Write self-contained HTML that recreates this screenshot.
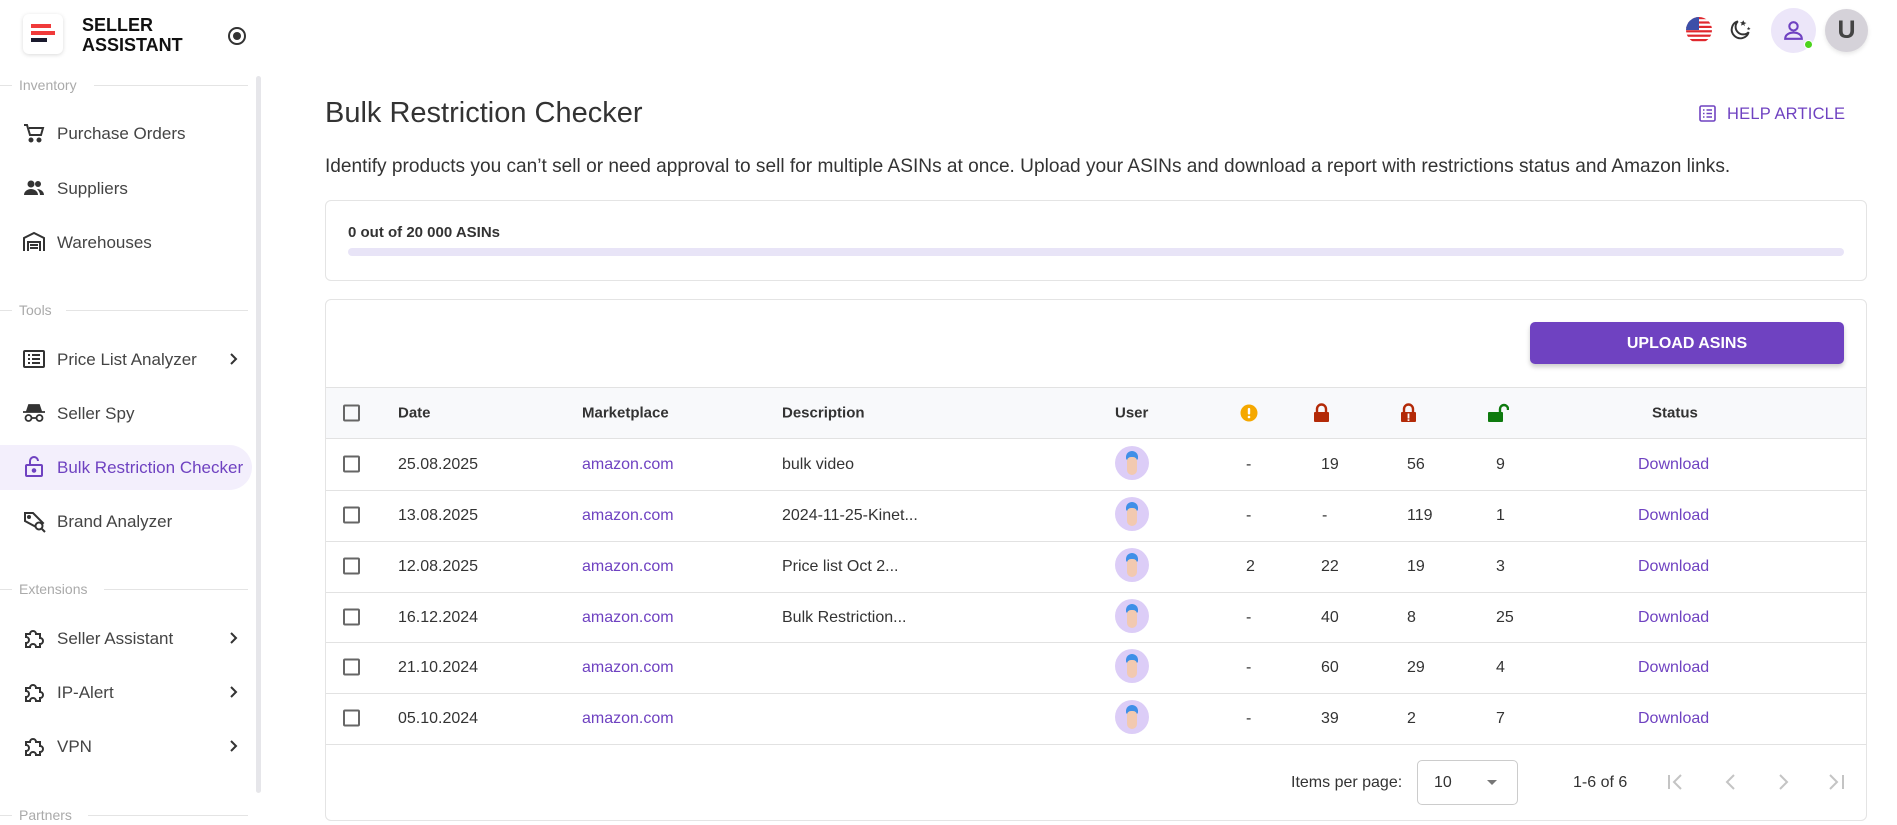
<!DOCTYPE html>
<html><head><meta charset="utf-8"><style>
*{box-sizing:border-box;margin:0;padding:0}
body{width:1897px;height:825px;overflow:hidden;background:#fff;font-family:"Liberation Sans",sans-serif;color:#333;position:relative}
.a{position:absolute;white-space:nowrap}
.sec{position:absolute;left:19px;font-size:14px;color:#aaa;}
.secl{position:absolute;height:1px;background:#e4e4e4;right:48px}
.nav{position:absolute;left:57px;font-size:17px;color:#444;transform:translateY(-50%);margin-top:1px}
.ico{position:absolute;left:22px;width:24px;height:24px;transform:translateY(-50%)}
.chev{position:absolute;left:228px;transform:translateY(-50%)}
.th{position:absolute;font-size:15px;font-weight:bold;color:#333;transform:translateY(-50%)}
.td{position:absolute;font-size:16px;color:#333;transform:translateY(-50%);margin-top:1px}
.lk{color:#6f42c1}
.cb{position:absolute;left:343px;width:17px;height:17px;border:2px solid #666;border-radius:2px;transform:translateY(-50%)}
.av{position:absolute;left:1115px;width:34px;height:34px;border-radius:50%;background:#dccdf7;transform:translateY(-50%);overflow:hidden}
.rl{position:absolute;left:326px;width:1540px;height:1px;background:#e2e2e2}
</style></head><body>
<!-- logo -->
<div class="a" style="left:23px;top:14px;width:40px;height:40px;border-radius:6px;background:#fff;box-shadow:0 1px 4px rgba(0,0,0,.15)"></div>
<div class="a" style="left:31px;top:24px;width:20px;height:4px;background:#f03a3a"></div>
<div class="a" style="left:31px;top:31px;width:24px;height:4px;background:#f03a3a"></div>
<div class="a" style="left:31px;top:38px;width:16px;height:4px;background:#1a1a2e"></div>
<div class="a" style="left:82px;top:15px;font-size:18px;font-weight:bold;line-height:20px;color:#111">SELLER<br>ASSISTANT</div>
<div class="a" style="left:228px;top:27px;width:18px;height:18px;border:2px solid #333;border-radius:50%"></div>
<div class="a" style="left:233px;top:32px;width:8px;height:8px;background:#333;border-radius:50%"></div>
<!-- scrollbar -->
<div class="a" style="left:256px;top:76px;width:5px;height:717px;background:#e6e6ea;border-radius:3px"></div>
<!-- sidebar -->
<div class="secl" style="left:0;width:12px;top:85px"></div><div class="sec" style="top:77px">Inventory</div><div class="secl" style="left:94px;width:154px;top:85px"></div>
<svg class="ico" style="top:133px" viewBox="0 0 24 24" fill="none" stroke="#333" stroke-width="2"><path d="M2 4h3l3 10h11l2-7H7"/><circle cx="9" cy="19" r="1.5" fill="#333"/><circle cx="17" cy="19" r="1.5" fill="#333"/></svg>
<div class="nav" style="top:133px">Purchase Orders</div>
<svg class="ico" style="top:188px" viewBox="0 0 24 24" fill="#333"><circle cx="9" cy="8" r="3.5"/><circle cx="16" cy="8" r="3" /><path d="M2 19c0-4 4-6 7-6s7 2 7 6zM15 13c3 0 7 2 7 6h-4c0-2-1-4-3-6z"/></svg>
<div class="nav" style="top:188px">Suppliers</div>
<svg class="ico" style="top:242px" viewBox="0 0 24 24" fill="none" stroke="#333" stroke-width="2"><path d="M2 21V8l10-5 10 5v13M6 21v-9h12v9M8 15h8M8 18h8"/></svg>
<div class="nav" style="top:242px">Warehouses</div>
<div class="secl" style="left:0;width:12px;top:310px"></div><div class="sec" style="top:302px">Tools</div><div class="secl" style="left:66px;width:182px;top:310px"></div>
<svg class="ico" style="top:359px" viewBox="0 0 24 24" fill="none" stroke="#333" stroke-width="2"><rect x="2" y="4" width="20" height="16" rx="1"/><path d="M6 8h2M6 12h2M6 16h2M10 8h8M10 12h8M10 16h8"/></svg>
<div class="nav" style="top:359px">Price List Analyzer</div>
<svg class="chev" style="top:359px" width="12" height="14" viewBox="0 0 12 14"><path d="M3 2l5 5-5 5" stroke="#333" stroke-width="2" fill="none"/></svg>
<svg class="ico" style="top:413px" viewBox="0 0 24 24" fill="none" stroke="#333" stroke-width="1.8"><path d="M5 10l2-6h10l2 6z" fill="#333"/><path d="M1 11h22"/><circle cx="6.5" cy="17" r="3"/><circle cx="17.5" cy="17" r="3"/><path d="M9.5 17h5"/></svg>
<div class="nav" style="top:413px">Seller Spy</div>
<div class="a" style="left:0;top:445px;width:252px;height:45px;background:#f3effc;border-radius:0 23px 23px 0"></div>
<svg class="ico" style="top:467px" viewBox="0 0 24 24" fill="none" stroke="#6f42c1" stroke-width="2"><rect x="4" y="10" width="16" height="11" rx="1"/><path d="M8 10V6a4 4 0 0 1 8 0"/><circle cx="12" cy="15.5" r="1.3" fill="#6f42c1"/></svg>
<div class="nav" style="top:467px;color:#6f42c1">Bulk Restriction Checker</div>
<svg class="ico" style="top:521px" viewBox="0 0 24 24" fill="none" stroke="#333" stroke-width="2"><path d="M3 4h8l10 10-5 5L3 12z"/><circle cx="7" cy="8" r="1" fill="#333"/><circle cx="17" cy="17" r="3.5" fill="#fff"/><path d="M20 20l3 3"/></svg>
<div class="nav" style="top:521px">Brand Analyzer</div>
<div class="secl" style="left:0;width:12px;top:589px"></div><div class="sec" style="top:581px">Extensions</div><div class="secl" style="left:104px;width:144px;top:589px"></div>
<svg class="ico" style="top:638px" viewBox="0 0 24 24" fill="none" stroke="#333" stroke-width="2"><path d="M4 8h4a3 3 0 1 1 6 0h4v4a3 3 0 1 1 0 6v3h-4a3 3 0 1 0-6 0H4v-4a3 3 0 1 0 0-6z"/></svg>
<div class="nav" style="top:638px">Seller Assistant</div>
<svg class="chev" style="top:638px" width="12" height="14" viewBox="0 0 12 14"><path d="M3 2l5 5-5 5" stroke="#333" stroke-width="2" fill="none"/></svg>
<svg class="ico" style="top:692px" viewBox="0 0 24 24" fill="none" stroke="#333" stroke-width="2"><path d="M4 8h4a3 3 0 1 1 6 0h4v4a3 3 0 1 1 0 6v3h-4a3 3 0 1 0-6 0H4v-4a3 3 0 1 0 0-6z"/></svg>
<div class="nav" style="top:692px">IP-Alert</div>
<svg class="chev" style="top:692px" width="12" height="14" viewBox="0 0 12 14"><path d="M3 2l5 5-5 5" stroke="#333" stroke-width="2" fill="none"/></svg>
<svg class="ico" style="top:746px" viewBox="0 0 24 24" fill="none" stroke="#333" stroke-width="2"><path d="M4 8h4a3 3 0 1 1 6 0h4v4a3 3 0 1 1 0 6v3h-4a3 3 0 1 0-6 0H4v-4a3 3 0 1 0 0-6z"/></svg>
<div class="nav" style="top:746px">VPN</div>
<svg class="chev" style="top:746px" width="12" height="14" viewBox="0 0 12 14"><path d="M3 2l5 5-5 5" stroke="#333" stroke-width="2" fill="none"/></svg>
<div class="secl" style="left:0;width:12px;top:815px"></div><div class="sec" style="top:807px">Partners</div><div class="secl" style="left:88px;width:160px;top:815px"></div>
<!-- top right -->
<svg class="a" style="left:1685px;top:16px" width="28" height="28" viewBox="0 0 28 28"><defs><clipPath id="c"><circle cx="14" cy="14" r="13"/></clipPath></defs><g clip-path="url(#c)"><rect width="28" height="28" fill="#fff"/><g fill="#e0282e"><rect y="1" width="28" height="2.2"/><rect y="5.4" width="28" height="2.2"/><rect y="9.8" width="28" height="2.2"/><rect y="14.2" width="28" height="2.2"/><rect y="18.6" width="28" height="2.2"/><rect y="23" width="28" height="2.2"/></g><rect width="14" height="14" fill="#3c4fa8"/></g></svg>
<svg class="a" style="left:1727px;top:17px" width="26" height="26" viewBox="0 0 24 24" fill="none" stroke="#333" stroke-width="1.8"><path d="M10 4a8 8 0 1 0 10 10A7 7 0 0 1 10 4z"/><path d="M15 3l1 2 2 .5-2 1 .5 2-1.5-1.5L13 8l.5-2L12 5l2-.3z" fill="#333" stroke="none"/><path d="M20 9l.6 1.2 1.2.3-1.2.6.2 1.2-.8-.8-1 .6.2-1.2-.9-.7 1.2-.1z" fill="#333" stroke="none"/></svg>
<div class="a" style="left:1771px;top:8px;width:45px;height:45px;border-radius:50%;background:#ece6f9"></div>
<svg class="a" style="left:1781px;top:18px" width="25" height="25" viewBox="0 0 24 24" fill="none" stroke="#6f42c1" stroke-width="2"><circle cx="12" cy="8" r="4"/><path d="M4 20c0-4 4-6 8-6s8 2 8 6z"/></svg>
<div class="a" style="left:1804px;top:40px;width:9px;height:9px;border-radius:50%;background:#4cd31d;border:1px solid #fff"></div>
<div class="a" style="left:1825px;top:9px;width:43px;height:43px;border-radius:50%;background:#d5d2d9;box-shadow:0 2px 4px rgba(0,0,0,.1);font-size:25px;font-weight:bold;color:#444;text-align:center;line-height:43px">U</div>
<!-- title -->
<div class="a" style="left:325px;top:97px;font-size:29px;color:#333">Bulk Restriction Checker</div>
<svg class="a" style="left:1699px;top:105px" width="17" height="17" viewBox="0 0 17 17" fill="none" stroke="#6f42c1" stroke-width="1.6"><rect x="1" y="1" width="15" height="15" rx="1.5"/><path d="M4 5h1.5M4 8.5h1.5M4 12h1.5M7.5 5H13M7.5 8.5H13M7.5 12H13"/></svg>
<div class="a" style="left:1727px;top:105px;font-size:16.5px;color:#6f42c1;letter-spacing:.2px">HELP ARTICLE</div>
<div class="a" style="left:325px;top:156px;font-size:19.1px;color:#333">Identify products you can’t sell or need approval to sell for multiple ASINs at once. Upload your ASINs and download a report with restrictions status and Amazon links.</div>
<!-- card1 -->
<div class="a" style="left:325px;top:200px;width:1542px;height:81px;border:1px solid #e4e4e4;border-radius:6px"></div>
<div class="a" style="left:348px;top:224px;font-size:15px;font-weight:bold;color:#333">0 out of 20 000 ASINs</div>
<div class="a" style="left:348px;top:248px;width:1496px;height:8px;background:#e8e4f7;border-radius:4px"></div>
<!-- card2 -->
<div class="a" style="left:325px;top:299px;width:1542px;height:522px;border:1px solid #e4e4e4;border-radius:6px"></div>
<div class="a" style="left:1530px;top:322px;width:314px;height:42px;background:#6f42c1;border-radius:5px;box-shadow:0 3px 5px rgba(0,0,0,.2);color:#fff;font-size:16px;font-weight:bold;text-align:center;line-height:44px">UPLOAD ASINS</div>
<div class="a" style="left:326px;top:387px;width:1540px;height:52px;background:#f8f9fb;border-top:1px solid #e2e2e2;border-bottom:1px solid #e2e2e2"></div>
<div class="cb" style="top:413px"></div>
<div class="th" style="left:398px;top:413px">Date</div>
<div class="th" style="left:582px;top:413px">Marketplace</div>
<div class="th" style="left:782px;top:413px">Description</div>
<div class="th" style="left:1115px;top:413px">User</div>
<svg class="a" style="left:1240px;top:404px" width="18" height="18" viewBox="0 0 18 18"><circle cx="9" cy="9" r="8.5" fill="#f5a800"/><rect x="7.8" y="4" width="2.4" height="6.5" rx="1" fill="#fff"/><circle cx="9" cy="13" r="1.3" fill="#fff"/></svg>
<svg class="a" style="left:1313px;top:403px" width="17" height="20" viewBox="0 0 17 20"><path d="M4 9V6a4.5 4.5 0 0 1 9 0v3" stroke="#b32a08" stroke-width="2.4" fill="none"/><rect x="1" y="9" width="15" height="10" rx="1" fill="#b32a08"/></svg>
<svg class="a" style="left:1400px;top:403px" width="17" height="20" viewBox="0 0 17 20"><path d="M4 9V6a4.5 4.5 0 0 1 9 0v3" stroke="#b32a08" stroke-width="2.4" fill="none"/><rect x="1" y="9" width="15" height="10" rx="1" fill="#b32a08"/><rect x="7.6" y="10.5" width="1.8" height="5" fill="#fff"/><rect x="7.6" y="16.3" width="1.8" height="1.6" fill="#fff"/></svg>
<svg class="a" style="left:1487px;top:403px" width="22" height="20" viewBox="0 0 22 20"><path d="M13 9V6a4 4 0 0 1 8 0v1" stroke="#0e7a0e" stroke-width="2.4" fill="none"/><rect x="1" y="9" width="15" height="10" rx="1" fill="#0e7a0e"/></svg>
<div class="th" style="left:1652px;top:413px">Status</div>

<div class="rl" style="top:490px"></div><div class="rl" style="top:541px"></div><div class="rl" style="top:592px"></div><div class="rl" style="top:642px"></div><div class="rl" style="top:693px"></div><div class="rl" style="top:744px"></div>

<!-- rows -->
<div class="cb" style="top:464px"></div><div class="td" style="left:398px;top:464px">25.08.2025</div><div class="td lk" style="left:582px;top:464px">amazon.com</div><div class="td" style="left:782px;top:464px">bulk video</div><div class="av" style="top:463px"></div><div class="td" style="left:1246px;top:464px">-</div><div class="td" style="left:1321px;top:464px">19</div><div class="td" style="left:1407px;top:464px">56</div><div class="td" style="left:1496px;top:464px">9</div><div class="td lk" style="left:1638px;top:464px">Download</div>

<div class="cb" style="top:515px"></div><div class="td" style="left:398px;top:515px">13.08.2025</div><div class="td lk" style="left:582px;top:515px">amazon.com</div><div class="td" style="left:782px;top:515px">2024-11-25-Kinet...</div><div class="av" style="top:514px"></div><div class="td" style="left:1246px;top:515px">-</div><div class="td" style="left:1322px;top:515px">-</div><div class="td" style="left:1407px;top:515px">119</div><div class="td" style="left:1496px;top:515px">1</div><div class="td lk" style="left:1638px;top:515px">Download</div>

<div class="cb" style="top:566px"></div><div class="td" style="left:398px;top:566px">12.08.2025</div><div class="td lk" style="left:582px;top:566px">amazon.com</div><div class="td" style="left:782px;top:566px">Price list Oct 2...</div><div class="av" style="top:565px"></div><div class="td" style="left:1246px;top:566px">2</div><div class="td" style="left:1321px;top:566px">22</div><div class="td" style="left:1407px;top:566px">19</div><div class="td" style="left:1496px;top:566px">3</div><div class="td lk" style="left:1638px;top:566px">Download</div>

<div class="cb" style="top:617px"></div><div class="td" style="left:398px;top:617px">16.12.2024</div><div class="td lk" style="left:582px;top:617px">amazon.com</div><div class="td" style="left:782px;top:617px">Bulk Restriction...</div><div class="av" style="top:616px"></div><div class="td" style="left:1246px;top:617px">-</div><div class="td" style="left:1321px;top:617px">40</div><div class="td" style="left:1407px;top:617px">8</div><div class="td" style="left:1496px;top:617px">25</div><div class="td lk" style="left:1638px;top:617px">Download</div>

<div class="cb" style="top:667px"></div><div class="td" style="left:398px;top:667px">21.10.2024</div><div class="td lk" style="left:582px;top:667px">amazon.com</div><div class="av" style="top:666px"></div><div class="td" style="left:1246px;top:667px">-</div><div class="td" style="left:1321px;top:667px">60</div><div class="td" style="left:1407px;top:667px">29</div><div class="td" style="left:1496px;top:667px">4</div><div class="td lk" style="left:1638px;top:667px">Download</div>

<div class="cb" style="top:718px"></div><div class="td" style="left:398px;top:718px">05.10.2024</div><div class="td lk" style="left:582px;top:718px">amazon.com</div><div class="av" style="top:717px"></div><div class="td" style="left:1246px;top:718px">-</div><div class="td" style="left:1321px;top:718px">39</div><div class="td" style="left:1407px;top:718px">2</div><div class="td" style="left:1496px;top:718px">7</div><div class="td lk" style="left:1638px;top:718px">Download</div>

<!-- pagination -->
<div class="td" style="left:1291px;top:782px">Items per page:</div>
<div class="a" style="left:1417px;top:760px;width:101px;height:45px;border:1px solid #ccc;border-radius:5px"></div>
<div class="td" style="left:1434px;top:782px">10</div>
<div class="a" style="left:1487px;top:780px;width:0;height:0;border-left:5px solid transparent;border-right:5px solid transparent;border-top:5px solid #777"></div>
<div class="td" style="left:1573px;top:782px">1-6 of 6</div>
<svg class="a" style="left:1666px;top:772px" width="190" height="20" viewBox="0 0 190 20" fill="none" stroke="#c4c4c4" stroke-width="2"><path d="M3 3v14M15 3l-7 7 7 7"/><path d="M68 3l-7 7 7 7"/><path d="M114 3l7 7-7 7"/><path d="M164 3l7 7-7 7M177 3v14"/></svg>
<style>.av::before{content:"";position:absolute;left:11px;top:5px;width:12px;height:9px;background:#3f8fe8;border-radius:6px 6px 2px 2px}.av::after{content:"";position:absolute;left:12px;top:11px;width:10px;height:18px;background:#f2c9b0;border-radius:4px 4px 5px 5px}</style>
</body></html>
